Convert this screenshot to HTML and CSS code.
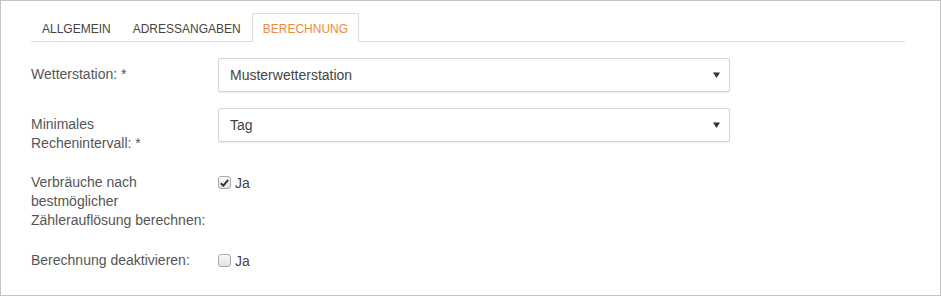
FILE: index.html
```html
<!DOCTYPE html>
<html lang="de">

<head>
    <meta charset="UTF-8">
    <title>Berechnung</title>
    <link rel="stylesheet" href="styles.css">
</head>

<body>
    <div class="panel">
        <ul class="tabs">
            <li class="tab">ALLGEMEIN</li>
            <li class="tab">ADRESSANGABEN</li>
            <li class="tab active">BERECHNUNG</li>
        </ul>

        <form class="form">
            <div class="row">
                <label class="label">Wetterstation: *</label>
                <div class="select">
                    <span>Musterwetterstation</span>
                    <svg class="caret" width="7" height="6" viewBox="0 0 7 6"><path d="M0 0.5H7L3.5 6Z" fill="#333" /></svg>
                </div>
            </div>

            <div class="row">
                <label class="label">Minimales<br>Rechenintervall: *</label>
                <div class="select">
                    <span>Tag</span>
                    <svg class="caret" width="7" height="6" viewBox="0 0 7 6"><path d="M0 0.5H7L3.5 6Z" fill="#333" /></svg>
                </div>
            </div>

            <div class="row check-row">
                <label class="label">Verbräuche nach<br>bestmöglicher<br>Zählerauflösung berechnen:</label>
                <div class="check">
                    <span class="box checked">
                        <svg width="9" height="8" viewBox="0 0 9 8"><path d="M0.8 4.2L3.3 6.6L8.2 0.9" stroke="#333" stroke-width="2" fill="none" /></svg>
                    </span>
                    <span>Ja</span>
                </div>
            </div>

            <div class="row check-row">
                <label class="label">Berechnung deaktivieren:</label>
                <div class="check">
                    <span class="box"></span>
                    <span>Ja</span>
                </div>
            </div>
        </form>
    </div>
</body>

</html>
```

FILE: styles.css
```css
* {
    box-sizing: border-box;
}

body {
    margin: 0;
    font-family: "Liberation Sans", Arial, sans-serif;
    font-size: 14px;
    color: #555;
    background-color: #fff;
}

.panel {
    width: 941px;
    height: 296px;
    border: 1px solid #c4c4c4;
    padding: 12px 35px 0 30px;
}

.tabs {
    display: flex;
    list-style: none;
    margin: 0;
    padding: 0;
    border-bottom: 1px solid #ddd;
}

.tab {
    padding: 0 10px;
    height: 28px;
    line-height: 30px;
    font-size: 12px;
    color: #444;
    border: 1px solid transparent;
    border-bottom: none;
    margin-bottom: -1px;
}

.tab.active {
    color: #f08a3c;
    border-color: #ddd;
    background-color: #fff;
    height: 29px;
}

.form {
    padding-top: 16px;
}

.row {
    display: flex;
    margin-bottom: 16px;
}

.label {
    width: 187px;
    padding-top: 7px;
    line-height: 19px;
}

.select {
    width: 512px;
    height: 34px;
    display: flex;
    align-items: center;
    justify-content: space-between;
    padding: 0 9px 0 11px;
    border: 1px solid #d4d4d4;
    border-radius: 2px;
    box-shadow: 0 1px 1px rgba(0, 0, 0, 0.08);
    color: #444;
}

.caret {
    margin-top: -1px;
}

.check-row {
    margin-bottom: 17px;
}

.check-row .label {
    padding-top: 4px;
}

.check {
    display: flex;
    align-items: center;
    height: 19px;
    margin-top: 4px;
    gap: 4px;
    color: #444;
}

.box {
    width: 13px;
    height: 13px;
    border: 1px solid #a9a9a9;
    border-radius: 3px;
    background: linear-gradient(#fafafa, #e2e2e2);
    display: flex;
    align-items: center;
    justify-content: center;
}
```
